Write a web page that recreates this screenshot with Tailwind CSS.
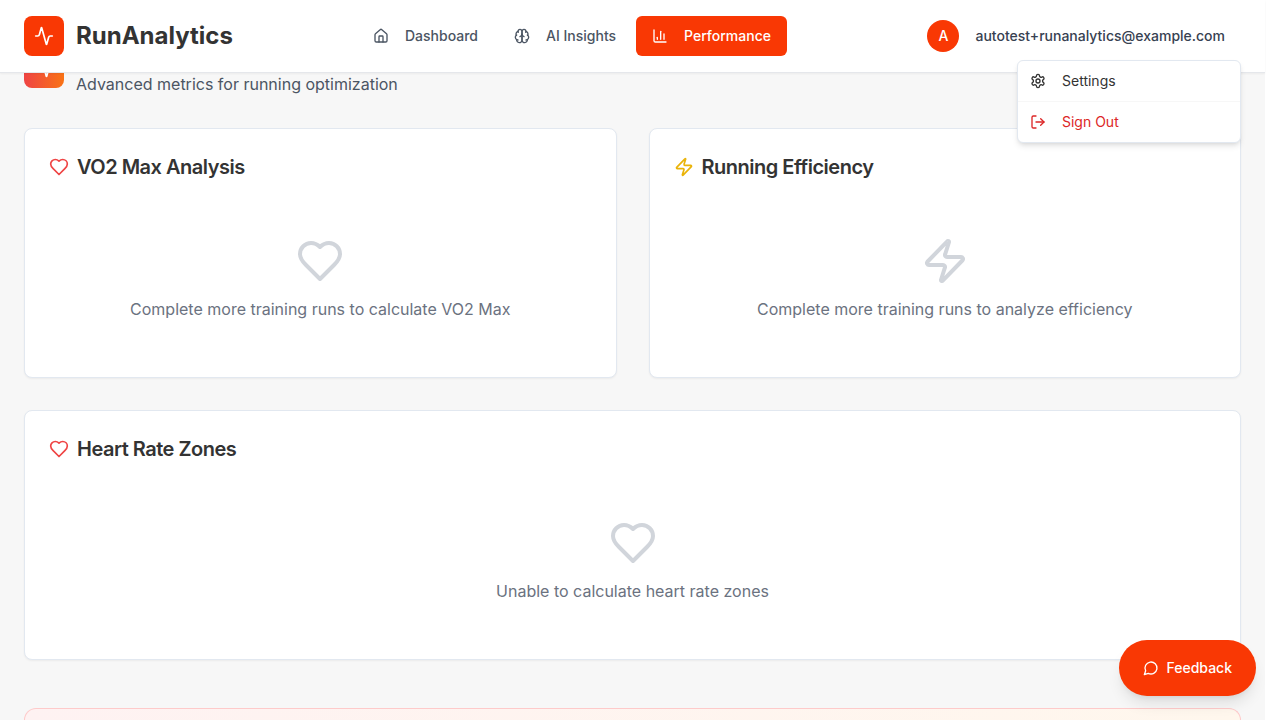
<!DOCTYPE html>
<html lang="en">
<head>
<meta charset="utf-8">
<title>RunAnalytics</title>
<script src="https://cdn.jsdelivr.net/npm/@tailwindcss/browser@4"></script>
</head>
<body class="h-screen overflow-hidden bg-white font-['Inter',sans-serif] text-[#333333]">
<svg class="hidden">
  <symbol id="heart" viewBox="0 0 24 24"><path d="M19 14c1.49-1.46 3-3.21 3-5.5A5.5 5.5 0 0 0 16.5 3c-1.76 0-3 .5-4.5 2-1.5-1.5-2.74-2-4.5-2A5.5 5.5 0 0 0 2 8.5c0 2.3 1.5 4.05 3 5.5l7 7Z"/></symbol>
  <symbol id="zap" viewBox="0 0 24 24"><path d="M4 14a1 1 0 0 1-.78-1.63l9.9-10.2a.5.5 0 0 1 .86.46l-1.92 6.02A1 1 0 0 0 13 10h7a1 1 0 0 1 .78 1.63l-9.9 10.2a.5.5 0 0 1-.86-.46l1.92-6.02A1 1 0 0 0 11 14z"/></symbol>
  <symbol id="activity" viewBox="0 0 24 24"><path d="M22 12h-2.48a2 2 0 0 0-1.93 1.46l-2.35 8.36a.25.25 0 0 1-.48 0L9.24 2.18a.25.25 0 0 0-.48 0l-2.35 8.36A2 2 0 0 1 4.49 12H2"/></symbol>
</svg>
<div class="relative flex h-full w-[1265px] flex-col bg-[#f7f7f7]">
  <header class="relative z-10 flex h-[73px] shrink-0 items-center justify-between border-b border-[#e5e7eb] bg-white px-6 shadow-xs">
    <div class="flex items-center gap-3">
      <div class="flex size-10 items-center justify-center rounded-lg bg-[#f93804]">
        <svg class="size-5 fill-none stroke-white stroke-2 [stroke-linecap:round] [stroke-linejoin:round]"><use href="#activity"/></svg>
      </div>
      <span class="text-2xl font-bold">RunAnalytics</span>
    </div>
    <nav class="absolute left-[357px] flex gap-1 text-sm font-medium text-[#4b5563]">
      <a class="flex h-10 items-center gap-4 rounded-md px-4">
        <svg viewBox="0 0 24 24" class="size-4 fill-none stroke-current stroke-2 [stroke-linecap:round] [stroke-linejoin:round]"><path d="M15 21v-8a1 1 0 0 0-1-1h-4a1 1 0 0 0-1 1v8"/><path d="M3 10a2 2 0 0 1 .709-1.528l7-5.999a2 2 0 0 1 2.582 0l7 5.999A2 2 0 0 1 21 10v9a2 2 0 0 1-2 2H5a2 2 0 0 1-2-2z"/></svg>
        Dashboard</a>
      <a class="flex h-10 items-center gap-4 rounded-md px-4">
        <svg viewBox="0 0 24 24" class="size-4 fill-none stroke-current stroke-2 [stroke-linecap:round] [stroke-linejoin:round]"><path d="M12 5a3 3 0 1 0-5.997.125 4 4 0 0 0-2.526 5.77 4 4 0 0 0 .556 6.588A4 4 0 1 0 12 18Z"/><path d="M12 5a3 3 0 1 1 5.997.125 4 4 0 0 1 2.526 5.77 4 4 0 0 1-.556 6.588A4 4 0 1 1 12 18Z"/><path d="M15 13a4.5 4.5 0 0 1-3-4 4.5 4.5 0 0 1-3 4"/><path d="M17.599 6.5a3 3 0 0 0 .399-1.375"/><path d="M6.003 5.125A3 3 0 0 0 6.401 6.5"/><path d="M3.477 10.896a4 4 0 0 1 .585-.396"/><path d="M19.938 10.5a4 4 0 0 1 .585.396"/><path d="M6 18a4 4 0 0 1-1.967-.516"/><path d="M19.967 17.484A4 4 0 0 1 18 18"/></svg>
        AI Insights</a>
      <a class="flex h-10 items-center gap-4 rounded-md bg-[#f93804] px-4 text-white">
        <svg viewBox="0 0 24 24" class="size-4 fill-none stroke-current stroke-2 [stroke-linecap:round] [stroke-linejoin:round]"><path d="M3 3v16a2 2 0 0 0 2 2h16"/><path d="M18 17V9"/><path d="M13 17V5"/><path d="M8 17v-3"/></svg>
        Performance</a>
    </nav>
    <div class="flex items-center gap-4 pr-4">
      <span class="flex size-8 items-center justify-center rounded-full bg-[#f93804] text-sm font-medium text-white">A</span>
      <span class="text-sm font-medium text-[#374151]">autotest+runanalytics@example.com</span>
    </div>
  </header>
  <div class="absolute top-[60px] right-6 z-20 w-56 overflow-hidden rounded-md border border-[#e2e8f0] bg-white text-sm shadow-md">
    <a class="flex h-10 items-center gap-4 px-3">
      <svg viewBox="0 0 24 24" class="size-4 fill-none stroke-current stroke-2 [stroke-linecap:round] [stroke-linejoin:round]"><path d="M12.22 2h-.44a2 2 0 0 0-2 2v.18a2 2 0 0 1-1 1.73l-.43.25a2 2 0 0 1-2 0l-.15-.08a2 2 0 0 0-2.73.73l-.22.38a2 2 0 0 0 .73 2.73l.15.1a2 2 0 0 1 1 1.72v.51a2 2 0 0 1-1 1.74l-.15.09a2 2 0 0 0-.73 2.73l.22.38a2 2 0 0 0 2.73.73l.15-.08a2 2 0 0 1 2 0l.43.25a2 2 0 0 1 1 1.73V20a2 2 0 0 0 2 2h.44a2 2 0 0 0 2-2v-.18a2 2 0 0 1 1-1.73l.43-.25a2 2 0 0 1 2 0l.15.08a2 2 0 0 0 2.73-.73l.22-.39a2 2 0 0 0-.73-2.73l-.15-.08a2 2 0 0 1-1-1.74v-.5a2 2 0 0 1 1-1.74l.15-.09a2 2 0 0 0 .73-2.73l-.22-.38a2 2 0 0 0-2.73-.73l-.15.08a2 2 0 0 1-2 0l-.43-.25a2 2 0 0 1-1-1.73V4a2 2 0 0 0-2-2z"/><circle cx="12" cy="12" r="3"/></svg>
      Settings</a>
    <div class="h-px bg-[#f7f7f7]"></div>
    <a class="flex h-10 items-center gap-4 px-3 text-[#dc2626]">
      <svg viewBox="0 0 24 24" class="size-4 fill-none stroke-current stroke-2 [stroke-linecap:round] [stroke-linejoin:round]"><path d="m16 17 5-5-5-5"/><path d="M21 12H9"/><path d="M9 21H5a2 2 0 0 1-2-2V5a2 2 0 0 1 2-2h4"/></svg>
      Sign Out</a>
  </div>
  <main class="-mt-[33px] flex min-h-0 flex-1 flex-col overflow-hidden px-6">
    <div class="mb-8 flex h-14 shrink-0 items-center gap-3">
      <div class="flex size-10 items-center justify-center rounded-lg bg-[linear-gradient(to_right,#ef4444,#f97316)]">
        <svg class="size-5 fill-none stroke-white stroke-2 [stroke-linecap:round] [stroke-linejoin:round]"><use href="#activity"/></svg>
      </div>
      <p class="self-end text-base text-[#4b5563]">Advanced metrics for running optimization</p>
    </div>
    <div class="grid shrink-0 grid-cols-2 gap-8">
      <section class="h-[250px] rounded-lg border border-[#e2e8f0] bg-white p-6 shadow-xs">
        <h2 class="flex h-7 items-center gap-2 text-xl font-semibold tracking-tight"><svg class="size-5 fill-none stroke-[#ef4444] stroke-2 [stroke-linecap:round] [stroke-linejoin:round]"><use href="#heart"/></svg>VO2 Max Analysis</h2>
        <div class="flex flex-col items-center pt-14 text-[#6b7280]"><svg class="mb-3 size-12 fill-none stroke-[#d1d5db] stroke-2 [stroke-linecap:round] [stroke-linejoin:round]"><use href="#heart"/></svg><p>Complete more training runs to calculate VO2 Max</p></div>
      </section>
      <section class="h-[250px] rounded-lg border border-[#e2e8f0] bg-white p-6 shadow-xs">
        <h2 class="flex h-7 items-center gap-2 text-xl font-semibold tracking-tight"><svg class="size-5 fill-none stroke-[#eab308] stroke-2 [stroke-linecap:round] [stroke-linejoin:round]"><use href="#zap"/></svg>Running Efficiency</h2>
        <div class="flex flex-col items-center pt-14 text-[#6b7280]"><svg class="mb-3 size-12 fill-none stroke-[#d1d5db] stroke-2 [stroke-linecap:round] [stroke-linejoin:round]"><use href="#zap"/></svg><p>Complete more training runs to analyze efficiency</p></div>
      </section>
    </div>
    <section class="mt-8 h-[250px] shrink-0 rounded-lg border border-[#e2e8f0] bg-white p-6 shadow-xs">
      <h2 class="flex h-7 items-center gap-2 text-xl font-semibold tracking-tight"><svg class="size-5 fill-none stroke-[#ef4444] stroke-2 [stroke-linecap:round] [stroke-linejoin:round]"><use href="#heart"/></svg>Heart Rate Zones</h2>
      <div class="flex flex-col items-center pt-14 text-[#6b7280]"><svg class="mb-3 size-12 fill-none stroke-[#d1d5db] stroke-2 [stroke-linecap:round] [stroke-linejoin:round]"><use href="#heart"/></svg><p>Unable to calculate heart rate zones</p></div>
    </section>
    <section class="mt-12 min-h-0 flex-1 rounded-t-xl border border-b-0 border-[#fecaca] bg-[linear-gradient(to_right,#fef2f2,#fff7ed)]"></section>
  </main>
  <button class="absolute top-[640px] right-[9px] z-20 flex h-14 items-center gap-2 rounded-full bg-[#f93804] px-6 text-sm font-medium text-white shadow-lg">
    <svg viewBox="0 0 24 24" class="size-4 fill-none stroke-current stroke-2 [stroke-linecap:round] [stroke-linejoin:round]"><path d="M7.9 20A9 9 0 1 0 4 16.1L2 22Z"/></svg>
    Feedback</button>
</div>
</body>
</html>
